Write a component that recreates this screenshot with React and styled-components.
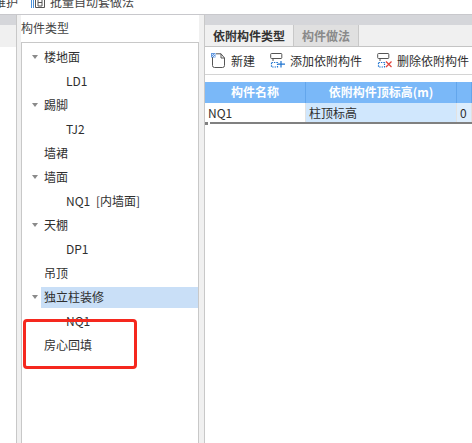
import React from "react";
import styled, { createGlobalStyle } from "styled-components";

const Global = createGlobalStyle`
  html, body { margin: 0; padding: 0; background: #fff; }
  * { box-sizing: border-box; }
  body { font-family: "Noto Sans CJK SC", "Liberation Sans", sans-serif; font-size: 12px; color: #2f2f2f; }
`;

const Page = styled.div`
  position: relative;
  width: 472px;
  height: 443px;
  overflow: hidden;
  display: flex;
  flex-direction: column;
  background: #fff;
`;

const TopStrip = styled.div`
  height: 15px;
  flex: none;
  border-bottom: 1px solid #c8c8cc;
  overflow: hidden;
  display: flex;
  align-items: flex-start;
  padding-left: 0;
`;

const TopLabel = styled.span`
  line-height: 14px;
  margin-top: -5px;
  margin-left: ${(p) => p.$left}px;
  white-space: nowrap;
  color: #444;
`;

const TopIcon = styled.svg`
  flex: none;
  width: 14px;
  height: 14px;
  margin-top: -5px;
  margin-left: 13px;
`;

const Main = styled.div`
  flex: 1;
  display: flex;
  min-height: 0;
`;

const LeftRail = styled.div`
  width: 17px;
  flex: none;
  border-right: 1px solid #c8c8c8;
  display: flex;
  flex-direction: column;
`;

const Band = styled.div`
  height: 10px;
  flex: none;
  background: #d5d6da;
`;

const RailTabs = styled.div`
  height: 22px;
  flex: none;
  background: #f0f0f0;
`;

const Panel = styled.div`
  width: 187px;
  flex: none;
  background: #f0f0f0;
  padding: 0 5px 0 4px;
  display: flex;
  flex-direction: column;
`;

const PanelTitle = styled.div`
  height: 27px;
  flex: none;
  background: #fff;
  line-height: 25px;
  color: #444;
`;

const TreeBox = styled.div`
  flex: 1;
  background: #fff;
  border: 1px solid #c8c8c8;
  border-bottom: none;
  padding-top: 2px;
`;

const Row = styled.div`
  height: 24px;
  display: flex;
  align-items: center;
  padding-left: ${(p) => (p.$child ? 44 : 10)}px;
`;

const Caret = styled.i`
  flex: none;
  width: 0;
  height: 0;
  margin-right: 3px;
  border-left: 3.5px solid transparent;
  border-right: 3.5px solid transparent;
  border-top: 4px solid ${(p) => (p.$hidden ? "transparent" : "#8a8a8a")};
`;

const Label = styled.span`
  height: 21px;
  line-height: 20px;
  padding-left: ${(p) => (p.$child ? 0 : 3)}px;
  white-space: nowrap;
  word-spacing: 3px;
  ${(p) => p.$selected && "flex: 1; background: #c9dff7;"}
`;

const Detail = styled.div`
  flex: 1;
  min-width: 0;
  border-left: 1px solid #c8c8c8;
  display: flex;
  flex-direction: column;
`;

const TabStrip = styled.div`
  height: 22px;
  flex: none;
  display: flex;
  background: #f0f0f0;
  border-bottom: 1px solid #c4c4c4;
`;

const Tab = styled.div`
  width: ${(p) => p.$w}px;
  text-align: center;
  line-height: 21px;
  font-weight: 700;
  color: ${(p) => (p.$active ? "#333" : "#8a8a8a")};
  background: ${(p) => (p.$active ? "#f0f0f0" : "#e0e0e0")};
  border-left: 1px solid ${(p) => (p.$active ? "#f0f0f0" : "#c8c8c8")};
  border-right: 1px solid ${(p) => (p.$active ? "#f0f0f0" : "#c8c8c8")};
`;

const Toolbar = styled.div`
  height: 28px;
  flex: none;
  display: flex;
  align-items: center;
  padding-left: 6px;
  border-bottom: 1px solid #d4d4d4;
  white-space: nowrap;
`;

const ToolButton = styled.div`
  display: flex;
  align-items: center;
  gap: 5px;
  margin-right: 15px;
  flex: none;
`;

const ToolIcon = styled.svg`
  width: 15px;
  height: 15px;
  flex: none;
`;

const Table = styled.div`
  margin-top: 7px;
  display: grid;
  grid-template-columns: 101px 151px 1fr;
`;

const Head = styled.div`
  height: 21px;
  background: #7ab8f8;
  border-right: 1px solid #63a6ec;
  color: #fff;
  font-weight: 700;
  text-align: center;
  line-height: 20px;
`;

const Cell = styled.div`
  height: 19px;
  line-height: 20px;
  padding-left: 3px;
  background: ${(p) => p.$bg};
  border-right: 1px solid #e2e2e2;
`;

const TableRule = styled.div`
  display: flex;
  align-items: flex-start;
  gap: 2px;
  height: 3px;
`;

const RuleDot = styled.i`
  width: 3px;
  height: 3px;
  flex: none;
  background: #808080;
`;

const RuleLine = styled.i`
  flex: 1;
  height: 2px;
  background: #808080;
`;

const Callout = styled.div`
  position: absolute;
  left: 23px;
  top: 319px;
  width: 114px;
  height: 50px;
  border: 3px solid #f5281e;
  border-radius: 4px;
  pointer-events: none;
`;

const tree = [
  { t: "楼地面", open: true },
  { t: "LD1", child: true },
  { t: "踢脚", open: true },
  { t: "TJ2", child: true },
  { t: "墙裙" },
  { t: "墙面", open: true },
  { t: "NQ1 [内墙面]", child: true },
  { t: "天棚", open: true },
  { t: "DP1", child: true },
  { t: "吊顶" },
  { t: "独立柱装修", open: true, selected: true },
  { t: "NQ1", child: true },
  { t: "房心回填" },
];

const Dashed = () => (
  <path d="M1.5 9.5h6v4.5h-6z" fill="none" stroke="#1f74d0" strokeWidth="1.2" strokeDasharray="1.4 1" />
);

const NewIcon = () => (
  <ToolIcon viewBox="0 0 15 15">
    <path d="M1.5 4v8.5a2 2 0 0 0 2 2h8a2 2 0 0 0 2-2V5L10 .8H5" fill="none" stroke="#555" strokeWidth="1" />
    <path d="M10 .8V5h3.5" fill="none" stroke="#555" strokeWidth="1" />
    <path d="M0 0h4.5v4.5H0z" fill="#3f7fd6" opacity=".8" />
    <path d="M1 1h1v1H1zM3 1h1v1H3zM2 2h1v1H2zM1 3h1v1H1zM3 3h1v1H3z" fill="#cfe2fa" />
  </ToolIcon>
);

const Boxes = () => (
  <>
    <path d="M1.5.5h9.5a.8.8 0 0 1 .8.8v3.4a.8.8 0 0 1-.8.8H1.5a.8.8 0 0 1-.8-.8V1.3a.8.8 0 0 1 .8-.8z" fill="none" stroke="#555" strokeWidth="1" />
    <path d="M3 5.5v2.5" stroke="#555" strokeWidth="1" />
    <Dashed />
  </>
);

const AddIcon = () => (
  <ToolIcon viewBox="0 0 15 15">
    <Boxes />
    <path d="M11 8v6.5M8 11.2h7" stroke="#1f74d0" strokeWidth="1.2" fill="none" />
  </ToolIcon>
);

const RemoveIcon = () => (
  <ToolIcon viewBox="0 0 15 15">
    <Boxes />
    <path d="M9 8.5l5.5 5.5M14.5 8.5L9 14" stroke="#e0433a" strokeWidth="1.2" fill="none" />
  </ToolIcon>
);

export default function App() {
  return (
    <Page>
      <Global />
      <TopStrip>
        <TopLabel $left={-6}>维护</TopLabel>
        <TopIcon viewBox="0 0 14 14">
          <path d="M.5 2v11M2.5 2v11" stroke="#4a90d9" fill="none" />
          <path d="M4.5 1.5h9v11h-9zM7 4h4v7H7zM7 7.5h4" stroke="#555" fill="none" />
        </TopIcon>
        <TopLabel $left={5}>批量自动套做法</TopLabel>
      </TopStrip>
      <Main>
        <LeftRail>
          <Band />
          <RailTabs />
        </LeftRail>
        <Panel>
          <PanelTitle>构件类型</PanelTitle>
          <TreeBox>
            {tree.map((n) => (
              <Row key={n.t} $child={n.child}>
                {!n.child && <Caret $hidden={!n.open} />}
                <Label $child={n.child} $selected={n.selected}>{n.t}</Label>
              </Row>
            ))}
          </TreeBox>
        </Panel>
        <Detail>
          <Band />
          <TabStrip>
            <Tab $active $w={88}>依附构件类型</Tab>
            <Tab $w={66}>构件做法</Tab>
          </TabStrip>
          <Toolbar>
            <ToolButton><NewIcon />新建</ToolButton>
            <ToolButton><AddIcon />添加依附构件</ToolButton>
            <ToolButton><RemoveIcon />删除依附构件</ToolButton>
          </Toolbar>
          <Table>
            <Head>构件名称</Head>
            <Head>依附构件顶标高(m)</Head>
            <Head />
            <Cell $bg="#fff">NQ1</Cell>
            <Cell $bg="#d0e7fd">柱顶标高</Cell>
            <Cell $bg="#dcedfd">0</Cell>
          </Table>
          <TableRule>
            <RuleDot />
            <RuleLine />
          </TableRule>
        </Detail>
      </Main>
      <Callout />
    </Page>
  );
}
